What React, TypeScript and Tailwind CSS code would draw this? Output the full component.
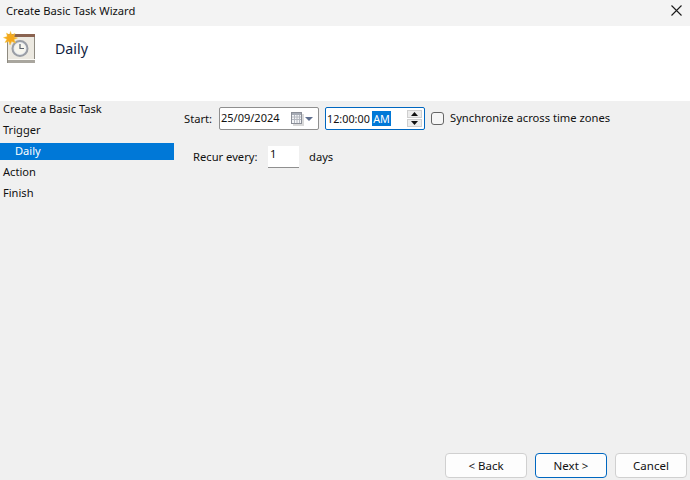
const font = { fontFamily: '"Noto Sans", "Open Sans", sans-serif' };

function TaskIcon() {
  return (
    <svg width="36" height="34" viewBox="0 0 36 34">
      <rect x="6.5" y="4.5" width="27" height="28" fill="#ece9e1" stroke="#8e8a80" />
      <rect x="7" y="4" width="27" height="3" fill="#8a6350" />
      <rect x="7" y="29" width="27" height="1" fill="#fbfaf6" />
      <rect x="7" y="30" width="27" height="3" fill="#a9a69e" />
      <circle cx="19" cy="18.5" r="7.5" fill="#e6e9ee" stroke="#9a9ea5" strokeWidth="2" />
      <circle cx="19" cy="18.5" r="5.5" fill="#f7f6ee" />
      <path d="M19 14V18.5H23" fill="none" stroke="#5c6470" strokeWidth="1.2" />
      <path
        d="M9.5 1.5 10.7 5 14 3.5 12.9 7 16.5 8 13 9.4 14.5 13 10.7 11.4 9 15 7.9 11.4 4 12.5 5.9 9.3 2.5 7.6 6.3 6.6 5.5 3 8.5 5Z"
        fill="#f5a81c"
        stroke="#f7c948"
        strokeWidth="0.5"
      />
    </svg>
  );
}

function CalendarIcon() {
  return (
    <svg width="13" height="14" viewBox="0 0 13 14">
      <rect x="2" y="2" width="11" height="12" fill="#d9d9d9" />
      <rect x="0.5" y="0.5" width="10" height="11" fill="#f4f5f7" stroke="#8b8f98" />
      <rect x="1" y="1" width="9" height="2" fill="#a6abb5" />
      <path d="M1 5H10M1 7.5H10M3.5 3V11M6 3V11M8.5 3V11" stroke="#b4b8c0" strokeWidth="1" />
    </svg>
  );
}

function WizardButton({ label, focused, wide }: { label: string; focused?: boolean; wide?: boolean }) {
  return (
    <button
      className={`h-[25px] shrink-0 rounded-[4px] bg-[#fdfdfd] text-[11.5px] leading-none text-[#111] border ${
        wide ? "w-[82px]" : "w-[72px]"
      } ${focused ? "border-[#0067c0]" : "border-[#d0d0d0]"}`}
    >
      {label}
    </button>
  );
}

export default function App() {
  const steps = ["Create a Basic Task", "Trigger", "Daily", "Action", "Finish"];

  return (
    <div className="w-[690px] h-[480px] flex flex-col overflow-hidden bg-[#f0f0f0] text-[#111]" style={font}>
      {/* Title bar */}
      <div className="h-[26px] shrink-0 flex items-start justify-between pl-[6px] pr-[8px] pt-[2px] bg-[#f3f3f3]">
        <span className="text-[11.2px] leading-[17px]">Create Basic Task Wizard</span>
        <svg width="11" height="11" viewBox="0 0 11 11" className="mt-[3px]">
          <path d="M0.5 0.5 10.5 10.5M10.5 0.5 0.5 10.5" stroke="#1a1a1a" strokeWidth="1.1" />
        </svg>
      </div>

      {/* Header */}
      <div className="h-[75px] shrink-0 bg-white flex items-start">
        <div className="ml-[1px] mt-[4px] w-[54px]">
          <TaskIcon />
        </div>
        <span className="mt-[12px] text-[14.2px] leading-[22px] text-[#10223f]">Daily</span>
      </div>

      <div className="flex-1 flex min-h-0">
        {/* Steps */}
        <div className="w-[174px] shrink-0 flex flex-col text-[11.1px] leading-[15px]">
          {steps.map((step, i) =>
            step === "Daily" ? (
              <div key={step} className="h-[17px] my-[2px] pl-[15px] pb-[2px] flex items-center bg-[#0078d7] text-white">
                {step}
              </div>
            ) : (
              <div key={step} className={i === 0 ? "h-[19px] pl-[3px]" : "h-[21px] pl-[3px] pb-[2px] flex items-center"}>
                {step}
              </div>
            ),
          )}
        </div>

        {/* Content */}
        <div className="flex-1 min-w-0 flex flex-col pt-[6px] pl-[10px] text-[11.2px]">
          <div className="flex items-center h-[23px]">
            <span className="w-[35px] pt-[1px]">Start:</span>
            <div className="w-[100px] h-[23px] flex items-center justify-between pl-[1px] pr-[5px] bg-white border border-[#8f8f8f] rounded-[2px]">
              <span className="text-[11px]">25/09/2024</span>
              <span className="flex items-center gap-[1px]">
                <CalendarIcon />
                <svg width="8" height="4" viewBox="0 0 8 4">
                  <path d="M0 0H8L4 4Z" fill="#5f6f8f" />
                </svg>
              </span>
            </div>
            <div className="ml-[6px] w-[100px] h-[23px] flex items-center justify-between pl-[1px] pr-[2px] bg-white border border-[#0067c0] rounded-[2px]">
              <span className="flex items-center whitespace-nowrap text-[10.8px] leading-[15px]">
                <span className="w-[45px]">12:00:00</span>
                <span className="w-[19px] h-[15px] text-center bg-[#0078d7] text-white">AM</span>
              </span>
              <span className="w-[15px] h-[17px] flex flex-col gap-[1px]">
                <span className="flex-1 flex items-center justify-center bg-[#ececec] border border-[#cfcfcf]">
                  <svg width="7" height="4" viewBox="0 0 7 4">
                    <path d="M3.5 0 7 4H0Z" fill="#111" />
                  </svg>
                </span>
                <span className="flex-1 flex items-center justify-center bg-[#ececec] border border-[#cfcfcf]">
                  <svg width="7" height="4" viewBox="0 0 7 4">
                    <path d="M0 0H7L3.5 4Z" fill="#111" />
                  </svg>
                </span>
              </span>
            </div>
            <div className="ml-[6px] w-[13px] h-[13px] bg-[#f6f6f6] border border-[#666] rounded-[3px]" />
            <span className="ml-[6px] pb-[1px] whitespace-nowrap">Synchronize across time zones</span>
          </div>

          <div className="flex items-center mt-[16px] ml-[9px] h-[22px]">
            <span className="w-[75px] pt-[1px]">Recur every:</span>
            <div className="w-[31px] h-[22px] pl-[2px] flex items-start bg-white border-b border-[#8f8f8f]">1</div>
            <span className="ml-[10px] pt-[1px]">days</span>
          </div>

          {/* Footer buttons */}
          <div className="mt-auto mb-[2px] ml-[261px] flex gap-[8px]">
            <WizardButton label="< Back" wide />
            <WizardButton label="Next >" focused />
            <WizardButton label="Cancel" />
          </div>
        </div>
      </div>
    </div>
  );
}
